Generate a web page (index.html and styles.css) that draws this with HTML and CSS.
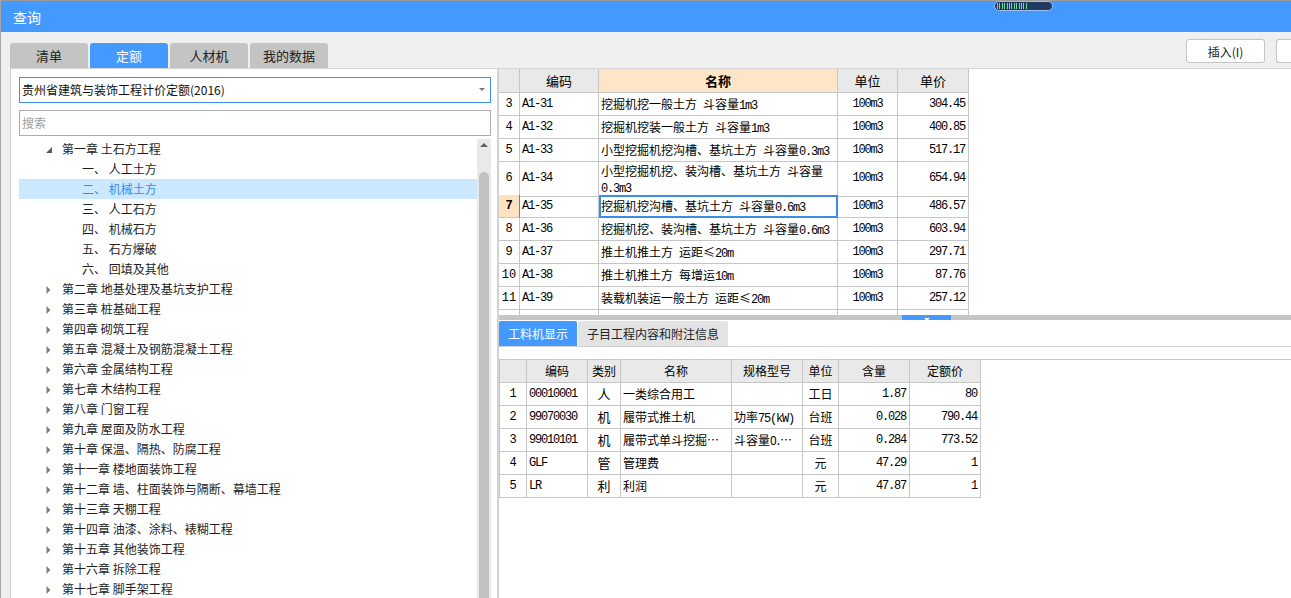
FILE: index.html
```html
<!DOCTYPE html>
<html lang="zh-CN">
<head>
<meta charset="utf-8">
<title>查询</title>
<link rel="stylesheet" href="styles.css">
</head>
<body>
<div class="win">
  <div class="titlebar">
    <span class="title">查询</span>
    <div class="pill"><div class="pill-bars"></div></div>
  </div>
  <div class="toolbar">
    <div class="tabs">
      <div class="tab">清单</div>
      <div class="tab active">定额</div>
      <div class="tab">人材机</div>
      <div class="tab">我的数据</div>
    </div>
    <div class="buttons">
      <button class="btn">插入(I)</button>
      <button class="btn cut"></button>
    </div>
  </div>
  <div class="content">
    <div class="left">
      <div class="combo">贵州省建筑与装饰工程计价定额(2016)</div>
      <div class="search">搜索</div>
      <div class="treewrap">
        <div class="tree">
          <div class="node ch"><svg class="arr" width="16" height="20"><path d="M6 8V14H0Z" fill="#5a5a5a"/></svg>第一章 土石方工程</div>
          <div class="node sub">一、 人工土方</div>
          <div class="node sub sel">二、 机械土方</div>
          <div class="node sub">三、 人工石方</div>
          <div class="node sub">四、 机械石方</div>
          <div class="node sub">五、 石方爆破</div>
          <div class="node sub">六、 回填及其他</div>
          <div class="node ch"><svg class="arr" width="16" height="20"><path d="M0.5 7L4.5 11L0.5 15Z" fill="#808080"/></svg>第二章 地基处理及基坑支护工程</div>
          <div class="node ch"><svg class="arr" width="16" height="20"><path d="M0.5 7L4.5 11L0.5 15Z" fill="#808080"/></svg>第三章 桩基础工程</div>
          <div class="node ch"><svg class="arr" width="16" height="20"><path d="M0.5 7L4.5 11L0.5 15Z" fill="#808080"/></svg>第四章 砌筑工程</div>
          <div class="node ch"><svg class="arr" width="16" height="20"><path d="M0.5 7L4.5 11L0.5 15Z" fill="#808080"/></svg>第五章 混凝土及钢筋混凝土工程</div>
          <div class="node ch"><svg class="arr" width="16" height="20"><path d="M0.5 7L4.5 11L0.5 15Z" fill="#808080"/></svg>第六章 金属结构工程</div>
          <div class="node ch"><svg class="arr" width="16" height="20"><path d="M0.5 7L4.5 11L0.5 15Z" fill="#808080"/></svg>第七章 木结构工程</div>
          <div class="node ch"><svg class="arr" width="16" height="20"><path d="M0.5 7L4.5 11L0.5 15Z" fill="#808080"/></svg>第八章 门窗工程</div>
          <div class="node ch"><svg class="arr" width="16" height="20"><path d="M0.5 7L4.5 11L0.5 15Z" fill="#808080"/></svg>第九章 屋面及防水工程</div>
          <div class="node ch"><svg class="arr" width="16" height="20"><path d="M0.5 7L4.5 11L0.5 15Z" fill="#808080"/></svg>第十章 保温、隔热、防腐工程</div>
          <div class="node ch"><svg class="arr" width="16" height="20"><path d="M0.5 7L4.5 11L0.5 15Z" fill="#808080"/></svg>第十一章 楼地面装饰工程</div>
          <div class="node ch"><svg class="arr" width="16" height="20"><path d="M0.5 7L4.5 11L0.5 15Z" fill="#808080"/></svg>第十二章 墙、柱面装饰与隔断、幕墙工程</div>
          <div class="node ch"><svg class="arr" width="16" height="20"><path d="M0.5 7L4.5 11L0.5 15Z" fill="#808080"/></svg>第十三章 天棚工程</div>
          <div class="node ch"><svg class="arr" width="16" height="20"><path d="M0.5 7L4.5 11L0.5 15Z" fill="#808080"/></svg>第十四章 油漆、涂料、裱糊工程</div>
          <div class="node ch"><svg class="arr" width="16" height="20"><path d="M0.5 7L4.5 11L0.5 15Z" fill="#808080"/></svg>第十五章 其他装饰工程</div>
          <div class="node ch"><svg class="arr" width="16" height="20"><path d="M0.5 7L4.5 11L0.5 15Z" fill="#808080"/></svg>第十六章 拆除工程</div>
          <div class="node ch"><svg class="arr" width="16" height="20"><path d="M0.5 7L4.5 11L0.5 15Z" fill="#808080"/></svg>第十七章 脚手架工程</div>
        </div>
        <div class="vscroll">
          <div class="up"><svg width="8" height="4"><path d="M4 0L8 4H0Z" fill="#606060"/></svg></div>
          <div class="thumb"></div>
        </div>
      </div>
    </div>
    <div class="right">
      <div class="topgrid">
        <div class="trow thead">
          <div class="c"></div><div class="c">编码</div><div class="c hl">名称</div><div class="c">单位</div><div class="c">单价</div>
        </div>
        <div class="trow">
          <div class="c n m">3</div><div class="c m">A1-31</div><div class="c">挖掘机挖一般土方<span class="m"> </span>斗容量<span class="m">1m3</span></div><div class="c m ctr">100m3</div><div class="c m r">304.45</div>
        </div>
        <div class="trow">
          <div class="c n m">4</div><div class="c m">A1-32</div><div class="c">挖掘机挖装一般土方<span class="m"> </span>斗容量<span class="m">1m3</span></div><div class="c m ctr">100m3</div><div class="c m r">400.85</div>
        </div>
        <div class="trow">
          <div class="c n m">5</div><div class="c m">A1-33</div><div class="c">小型挖掘机挖沟槽、基坑土方<span class="m"> </span>斗容量<span class="m">0.3m3</span></div><div class="c m ctr">100m3</div><div class="c m r">517.17</div>
        </div>
        <div class="trow tall">
          <div class="c n m">6</div><div class="c m">A1-34</div><div class="c wrap">小型挖掘机挖、装沟槽、基坑土方<span class="m"> </span>斗容量<br><span class="m">0.3m3</span></div><div class="c m ctr">100m3</div><div class="c m r">654.94</div>
        </div>
        <div class="trow cur">
          <div class="c n m">7</div><div class="c m">A1-35</div><div class="c focus">挖掘机挖沟槽、基坑土方<span class="m"> </span>斗容量<span class="m">0.6m3</span></div><div class="c m ctr">100m3</div><div class="c m r">486.57</div>
        </div>
        <div class="trow">
          <div class="c n m">8</div><div class="c m">A1-36</div><div class="c">挖掘机挖、装沟槽、基坑土方<span class="m"> </span>斗容量<span class="m">0.6m3</span></div><div class="c m ctr">100m3</div><div class="c m r">603.94</div>
        </div>
        <div class="trow">
          <div class="c n m">9</div><div class="c m">A1-37</div><div class="c">推土机推土方<span class="m"> </span>运距≤<span class="m">20m</span></div><div class="c m ctr">100m3</div><div class="c m r">297.71</div>
        </div>
        <div class="trow">
          <div class="c n m">10</div><div class="c m">A1-38</div><div class="c">推土机推土方<span class="m"> </span>每增运<span class="m">10m</span></div><div class="c m ctr">100m3</div><div class="c m r">87.76</div>
        </div>
        <div class="trow">
          <div class="c n m">11</div><div class="c m">A1-39</div><div class="c">装载机装运一般土方<span class="m"> </span>运距≤<span class="m">20m</span></div><div class="c m ctr">100m3</div><div class="c m r">257.12</div>
        </div>
        <div class="trow">
          <div class="c n"></div><div class="c"></div><div class="c"></div><div class="c"></div><div class="c"></div>
        </div>
      </div>
      <div class="splitter"><div class="handle"><svg width="6" height="3"><path d="M0 0H6L3 3Z" fill="#fff"/></svg></div></div>
      <div class="btabs">
        <div class="btab active">工料机显示</div>
        <div class="btab">子目工程内容和附注信息</div>
      </div>
      <div class="bottom">
        <div class="bgrid">
          <div class="brow bhead">
            <div class="c"></div><div class="c">编码</div><div class="c">类别</div><div class="c">名称</div><div class="c">规格型号</div><div class="c">单位</div><div class="c">含量</div><div class="c">定额价</div>
          </div>
          <div class="brow">
            <div class="c n m">1</div><div class="c m">00010001</div><div class="c ctr big">人</div><div class="c">一类综合用工</div><div class="c"></div><div class="c ctr">工日</div><div class="c m r">1.87</div><div class="c m r">80</div>
          </div>
          <div class="brow">
            <div class="c n m">2</div><div class="c m">99070030</div><div class="c ctr big">机</div><div class="c">履带式推土机</div><div class="c">功率<span class="m">75(kW)</span></div><div class="c ctr">台班</div><div class="c m r">0.028</div><div class="c m r">790.44</div>
          </div>
          <div class="brow">
            <div class="c n m">3</div><div class="c m">99010101</div><div class="c ctr big">机</div><div class="c">履带式单斗挖掘…</div><div class="c">斗容量0.…</div><div class="c ctr">台班</div><div class="c m r">0.284</div><div class="c m r">773.52</div>
          </div>
          <div class="brow">
            <div class="c n m">4</div><div class="c m">GLF</div><div class="c ctr big">管</div><div class="c">管理费</div><div class="c"></div><div class="c ctr">元</div><div class="c m r">47.29</div><div class="c m r">1</div>
          </div>
          <div class="brow">
            <div class="c n m">5</div><div class="c m">LR</div><div class="c ctr big">利</div><div class="c">利润</div><div class="c"></div><div class="c ctr">元</div><div class="c m r">47.87</div><div class="c m r">1</div>
          </div>
        </div>
      </div>
    </div>
  </div>
</div>
</body>
</html>
```

FILE: styles.css
```css
* { box-sizing: border-box; margin: 0; padding: 0; }
html, body { width: 1291px; height: 598px; overflow: hidden; }
body {
  background: #f0f0f0;
  font-family: "Noto Sans CJK SC", "Liberation Sans", sans-serif;
  font-size: 12px;
  color: #1e1e1e;
}
.win {
  height: 598px;
  border-top: 1px solid #9c9c9c;
  border-left: 1px solid #a6a6a6;
  display: flex;
  flex-direction: column;
  position: relative;
}
.titlebar {
  flex: none;
  height: 31px;
  background: #4499ff;
  color: #fff;
  font-size: 14px;
  line-height: 33px;
  padding-left: 12px;
}
.pill {
  position: absolute;
  left: 993px;
  top: 0;
  width: 59px;
  height: 10px;
  border: 1px solid #9cbde6;
  border-radius: 5px;
  background: #1f3a62;
  padding: 1px 0 0 2px;
}
.pill-bars {
  width: 31px;
  height: 6px;
  background: repeating-linear-gradient(90deg, #6ee08c 0 1px, #1f3a62 1px 2.4px);
}
.toolbar {
  flex: none;
  height: 36px;
  display: flex;
  padding-left: 9px;
}
.tabs { display: flex; gap: 2px; align-self: flex-end; }
.tab {
  width: 78px;
  height: 25px;
  background: #c4c4c4;
  border-radius: 3px 3px 0 0;
  text-align: center;
  line-height: 25px;
  font-size: 13px;
  color: #222;
}
.tab.active { background: #4499ff; color: #fff; }
.buttons {
  margin-left: auto;
  margin-top: 7px;
  align-self: flex-start;
  display: flex;
  gap: 11px;
}
.btn {
  width: 79px;
  height: 24px;
  background: #fff;
  border: 1px solid #c4c4c4;
  border-radius: 3px;
  font-family: inherit;
  font-size: 12px;
  color: #222;
}
.btn.cut { width: 15px; border-right: none; border-radius: 3px 0 0 3px; }

.content {
  flex: 1;
  min-height: 0;
  display: flex;
  margin-left: 9px;
  border-top: 1px solid #d4d4d4;
  border-left: 1px solid #cdcdcd;
  background: #fff;
}
.left {
  flex: none;
  width: 480px;
  padding: 8px 0 0 8px;
  display: flex;
  flex-direction: column;
}
.combo {
  flex: none;
  position: relative;
  width: 472px;
  height: 26px;
  border: 1px solid #3d8fef;
  padding-left: 2px;
  line-height: 24px;
  color: #111;
}
.combo::after {
  content: "";
  position: absolute;
  right: 5px;
  top: 10px;
  border-left: 3px solid transparent;
  border-right: 3px solid transparent;
  border-top: 3px solid #777;
}
.search {
  flex: none;
  width: 472px;
  height: 26px;
  margin-top: 7px;
  border: 1px solid #acacac;
  padding-left: 2px;
  line-height: 24px;
  color: #a0a0a0;
}
.treewrap {
  flex: 1;
  min-height: 0;
  margin-top: 3px;
  display: flex;
  overflow: hidden;
}
.tree { width: 458px; flex: none; }
.node {
  height: 20px;
  line-height: 20px;
  white-space: nowrap;
  color: #1e1e1e;
}
.node.ch { padding-left: 27px; }
.node.sub { padding-left: 63px; }
.node.sel { background: #cce8ff; color: #3a8be4; }
.arr { vertical-align: top; }
.vscroll {
  width: 14px;
  flex: none;
  background: #e9e9e9;
  display: flex;
  flex-direction: column;
}
.up {
  height: 33px;
  flex: none;
  padding: 3px 0 0 3px;
  line-height: 0;
}
.thumb {
  flex: 1;
  margin: 0 2px;
  background: #c2c2c2;
  border-radius: 5px 5px 0 0;
}

.right {
  flex: 1;
  min-width: 0;
  margin-left: 6px;
  border-left: 2px solid #d2d2d2;
  display: flex;
  flex-direction: column;
}
.topgrid {
  flex: none;
  height: 246px;
  overflow: hidden;
}
.c {
  border-right: 1px solid #c6c6c6;
  border-bottom: 1px solid #c6c6c6;
  overflow: hidden;
  white-space: nowrap;
  padding: 0 2px;
  color: #000;
}
.m {
  font-family: "Liberation Mono", monospace;
  letter-spacing: -1.2px;
}
.c.n { text-align: center; padding: 0; letter-spacing: 0; }
.c.ctr { text-align: center; }
.c.big { font-size: 13px; }
.c.r { text-align: right; padding-right: 3px; }
.trow {
  display: grid;
  grid-template-columns: 21px 79px 239px 60px 71px;
  height: 23px;
  line-height: 22px;
}
.trow.thead {
  height: 24px;
  line-height: 23px;
  font-size: 13px;
}
.thead .c, .bhead .c { background: #e9e9e9; text-align: center; }
.thead .c.hl { background: #fde6c8; font-weight: bold; }
.trow.tall { height: 33px; line-height: 32px; }
.c.wrap { white-space: normal; line-height: 13px; padding-top: 2px; overflow: visible; }
.trow.cur .c.n { background: #fde2c0; font-weight: bold; border-right-color: #3a8ee6; }
.c.focus { outline: 2px solid #3a8ee6; outline-offset: -2px; }

.splitter {
  flex: none;
  height: 5px;
  background: #c6c6c6;
}
.handle {
  margin-left: 403px;
  width: 49px;
  height: 5px;
  background: #4499ff;
  text-align: center;
  line-height: 0;
  padding-top: 1px;
}
.btabs {
  flex: none;
  margin-top: 1px;
  height: 26px;
  border-bottom: 1px solid #d2d2d2;
  display: flex;
  gap: 1px;
}
.btab {
  height: 25px;
  line-height: 25px;
  text-align: center;
  border-radius: 2px 2px 0 0;
  width: 150px;
  background: #e3e3e3;
  color: #222;
}
.btab.active { width: 78px; background: #4499ff; color: #fff; }
.bottom {
  flex: 1;
  margin-top: 12px;
  border-top: 1px solid #c8c8c8;
}
.bgrid {
  width: 482px;
  border-left: 1px solid #c6c6c6;
}
.brow {
  display: grid;
  grid-template-columns: 27px 61px 33px 111px 71px 36px 71px 71px;
  height: 23px;
  line-height: 22px;
}
```
